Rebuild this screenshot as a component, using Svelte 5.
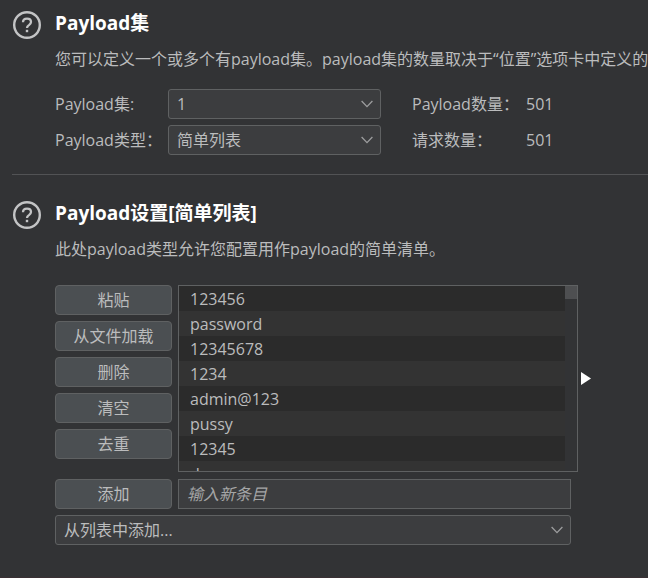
<script>
  const setOptions = ['1', '2', '3'];
  const typeOptions = ['简单列表', '数值', '暴力破解'];
  const actions = ['粘贴', '从文件加载', '删除', '清空', '去重'];
  const entries = ['123456', 'password', '12345678', '1234', 'admin@123', 'pussy', '12345', 'dragon'];

  let payloadSet = $state('1');
  let payloadType = $state('简单列表');
  let source = $state('从列表中添加...');
  let newEntry = $state('');
</script>

{#snippet helpIcon()}
  <button class="help" type="button" aria-label="帮助">
    <svg viewBox="0 0 30 30" width="30" height="30" fill="none" stroke="#c3c4c5">
      <circle cx="15" cy="15" r="12.8" stroke-width="2.4" />
      <path d="M11 12.300C11 9.900 12.700 8.700 15 8.700c2.300 0 4 1.300 4 3.300 0 1.600-1 2.300-2.100 3.100-1.200.8-1.900 1.400-1.900 2.900" stroke-width="2.300" />
      <rect x="13.800" y="19.800" width="2.400" height="2.400" fill="#c3c4c5" stroke="none" />
    </svg>
  </button>
{/snippet}

{#snippet chevron()}
  <svg class="chevron" viewBox="0 0 12 8" width="12" height="8" fill="none" stroke="#9c9d9e" stroke-width="1.3" aria-hidden="true">
    <path d="M.6 1 6 6.600 11.400 1" />
  </svg>
{/snippet}

<main>
  <section>
    {@render helpIcon()}
    <div class="body">
      <h2>Payload集</h2>
      <p>您可以定义一个或多个有payload集。payload集的数量取决于“位置”选项卡中定义的</p>
      <div class="form">
        <label for="set">Payload集:</label>
        <div class="combo">
          <select id="set" bind:value={payloadSet}>
            {#each setOptions as o}<option>{o}</option>{/each}
          </select>
          {@render chevron()}
        </div>
        <span class="count">Payload数量：</span>
        <output>501</output>

        <label for="type">Payload类型：</label>
        <div class="combo">
          <select id="type" bind:value={payloadType}>
            {#each typeOptions as o}<option>{o}</option>{/each}
          </select>
          {@render chevron()}
        </div>
        <span class="count">请求数量：</span>
        <output>501</output>
      </div>
    </div>
  </section>

  <hr />

  <section>
    {@render helpIcon()}
    <div class="body">
      <h2>Payload设置[简单列表]</h2>
      <p>此处payload类型允许您配置用作payload的简单清单。</p>
      <div class="editor">
        <div class="top">
          <div class="actions">
            {#each actions as a}<button class="btn" type="button">{a}</button>{/each}
          </div>
          <div class="list">
            <ul>
              {#each entries as e}<li>{e}</li>{/each}
            </ul>
            <div class="track"><div class="thumb"></div></div>
          </div>
          <button class="expand" type="button" aria-label="展开">
            <svg viewBox="0 0 10 13" width="10" height="13"><path d="M0 0 10 6.500 0 13z" fill="#fff" /></svg>
          </button>
        </div>
        <div class="add">
          <button class="btn" type="button">添加</button>
          <input type="text" placeholder="输入新条目" aria-label="输入新条目" bind:value={newEntry} />
        </div>
        <div class="combo from">
          <select aria-label="从列表中添加" bind:value={source}>
            <option>从列表中添加...</option>
          </select>
          {@render chevron()}
        </div>
      </div>
    </div>
  </section>
</main>

<style>
  :global(body) {
    background: #323335;
  }

  main {
    box-sizing: border-box;
    min-height: 100vh;
    padding: 10px 0 0 12px;
    overflow: hidden;
    background: #323335;
    border-bottom: 1px solid #3a3034;
    color: #bbbcbd;
    font: 16px/24px "Open Sans", "Noto Sans CJK SC", sans-serif;
  }

  section {
    display: flex;
    gap: 13px;
  }

  .help {
    flex: none;
    width: 30px;
    height: 30px;
    padding: 0;
    border: 0;
    background: none;
  }

  .help svg,
  .expand svg {
    display: block;
  }

  .body {
    flex: 1;
    min-width: 0;
  }

  h2 {
    margin: 0;
    color: #fff;
    font-size: 19px;
    line-height: 26px;
    font-weight: 700;
  }

  p {
    margin: 11px 0 0;
    white-space: nowrap;
  }

  .form {
    display: grid;
    grid-template-columns: 113px 213px 114px 1fr;
    row-gap: 6px;
    align-items: center;
    margin-top: 18px;
  }

  .form label,
  .count {
    white-space: nowrap;
  }

  .count,
  .form output {
    padding-left: 31px;
  }

  .combo {
    position: relative;
  }

  select,
  input,
  .btn {
    display: block;
    box-sizing: border-box;
    width: 100%;
    height: 30px;
    margin: 0;
    border: 1px solid #5f6162;
    color: #bbbcbd;
    font: inherit;
  }

  select {
    appearance: none;
    padding: 0 32px 0 8px;
    border-radius: 3px;
    background: #3c3d3f;
  }

  .chevron {
    position: absolute;
    top: 11px;
    right: 8px;
    pointer-events: none;
  }

  hr {
    height: 1px;
    margin: 19px 0 25px;
    border: 0;
    background: #525355;
  }

  .editor {
    max-width: 536px;
    margin-top: 24px;
  }

  .top {
    display: flex;
  }

  .actions {
    display: flex;
    flex: none;
    flex-direction: column;
    gap: 6px;
    width: 117px;
    margin-right: 6px;
  }

  .btn {
    padding: 0;
    border-radius: 4px;
    background: #4b4f52;
    text-align: center;
    line-height: 28px;
  }

  .list {
    display: flex;
    flex: 1;
    box-sizing: border-box;
    height: 187px;
    overflow: hidden;
    border: 1px solid #5f6162;
  }

  ul {
    flex: 1;
    margin: 0;
    padding: 0;
    list-style: none;
  }

  li {
    height: 25px;
    padding-left: 11px;
    background: #333333;
    line-height: 27px;
  }

  li:nth-child(odd) {
    background: #2b2b2b;
  }

  .track {
    width: 12px;
  }

  .thumb {
    height: 13px;
    background: #4e4f51;
  }

  .expand {
    flex: none;
    align-self: center;
    margin-left: 3px;
    padding: 0;
    border: 0;
    background: none;
  }

  .add {
    display: grid;
    grid-template-columns: 117px 1fr;
    gap: 6px;
    margin: 7px 20px 6px 0;
  }

  input {
    padding: 0 8px;
    border-radius: 0;
    background: #3c3d3f;
  }

  input::placeholder {
    color: #a4a5a6;
    font-style: italic;
    opacity: 1;
  }

  .from {
    margin-right: 20px;
  }
</style>
